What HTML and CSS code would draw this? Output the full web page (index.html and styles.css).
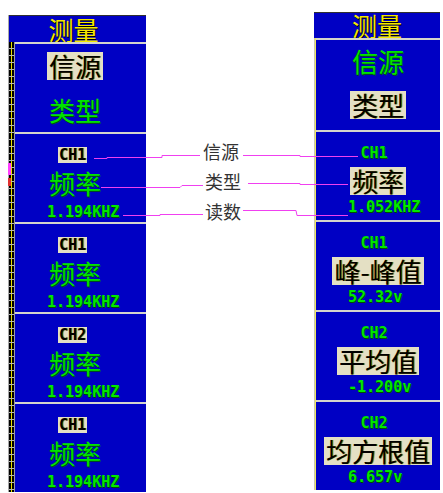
FILE: index.html
```html
<!DOCTYPE html>
<html lang="zh">
<head>
    <meta charset="UTF-8">
    <title>测量菜单</title>
    <link rel="stylesheet" href="styles.css">
</head>
<body>

<div class="page">

    <section class="scope scope-left">
        <div class="title">测量</div>
        <div class="body">
            <div class="strip"></div>
            <div class="menu">
                <div class="item item-pair">
                    <span class="name hi">信源</span>
                    <span class="name green">类型</span>
                </div>
                <div class="item">
                    <span class="ch hi">CH1</span>
                    <span class="name green">频率</span>
                    <span class="val">1.194KHZ</span>
                </div>
                <div class="item">
                    <span class="ch hi">CH1</span>
                    <span class="name green">频率</span>
                    <span class="val">1.194KHZ</span>
                </div>
                <div class="item">
                    <span class="ch hi">CH2</span>
                    <span class="name green">频率</span>
                    <span class="val">1.194KHZ</span>
                </div>
                <div class="item">
                    <span class="ch hi">CH1</span>
                    <span class="name green">频率</span>
                    <span class="val">1.194KHZ</span>
                </div>
            </div>
        </div>
    </section>

    <section class="scope scope-right">
        <div class="title">测量</div>
        <div class="body">
            <div class="strip"></div>
            <div class="menu">
                <div class="item item-pair">
                    <span class="name green">信源</span>
                    <span class="name hi">类型</span>
                </div>
                <div class="item">
                    <span class="ch green">CH1</span>
                    <span class="name hi">频率</span>
                    <span class="val">1.052KHZ</span>
                </div>
                <div class="item">
                    <span class="ch green">CH1</span>
                    <span class="name hi">峰-峰值</span>
                    <span class="val">52.32v</span>
                </div>
                <div class="item">
                    <span class="ch green">CH2</span>
                    <span class="name hi">平均值</span>
                    <span class="val">-1.200v</span>
                </div>
                <div class="item">
                    <span class="ch green">CH2</span>
                    <span class="name hi">均方根值</span>
                    <span class="val">6.657v</span>
                </div>
            </div>
        </div>
    </section>

    <!-- leader lines between the two menus -->
    <svg class="leaders" width="443" height="493" viewBox="0 0 443 493">
        <g fill="none" stroke="#f040f0" stroke-width="1">
            <polyline points="94,158.5 107,158.5 107,157.5 162,157.5 162,155.5 200,155.5"/>
            <polyline points="243,155.5 300,155.5 300,156.5 358,156.5"/>
            <polyline points="101,187.5 180,187.5 182,185.5 203,185.5"/>
            <polyline points="248,183.5 300,183.5 300,184.5 348,184.5"/>
            <polyline points="123,215.5 160,215.5 160,214.5 203,214.5"/>
            <polyline points="243,210.5 296,210.5 297,215.5 348,215.5"/>
        </g>
        <rect x="8" y="163" width="3" height="12" fill="#ff40ff"/>
        <rect x="8" y="178" width="3" height="8" fill="#e03030"/>
    </svg>

    <span class="note note-src">信源</span>
    <span class="note note-type">类型</span>
    <span class="note note-read">读数</span>

</div>

</body>
</html>
```

FILE: styles.css
```css
body {
    margin: 0;
    background: #fff;
    font-family: "Noto Sans CJK SC", "DejaVu Sans", sans-serif;
}

.page {
    position: relative;
    display: flex;
    align-items: flex-start;
    width: 443px;
    height: 493px;
    overflow: hidden;
}

.scope {
    background: #0000c4;
    display: flex;
    flex-direction: column;
}

.scope-left {
    margin: 15px 0 0 8px;
    width: 137px;
    border-left: 1px solid #a8a8a8;
}

.scope-right {
    margin: 12px 0 0 168px;
    width: 126px;
}

.title {
    border-top: 1px solid #303030;
    height: 26px;
    line-height: 26px;
    font-size: 25px;
    text-align: center;
    color: #f4e800;
    text-shadow: 1px 1px 0 #000;
}

.scope-left .title {
    padding-right: 8px;
}

.scope-right .title {
    height: 25px;
    line-height: 25px;
}

.body {
    display: flex;
}

.strip {
    width: 5px;
    flex: none;
    border-right: 1px solid #9a9a9a;
    background:
        repeating-linear-gradient(to bottom, transparent 0 6px, #b8b8b8 6px 7px),
        linear-gradient(to right, #000 0 2px, #e8e000 2px 3px, #000 3px);
}

.scope-right .strip {
    width: 2px;
    border-right: none;
    background: linear-gradient(to right, #c8c8b0 0 1px, #f0e860 1px);
}

.menu {
    flex: 1;
    display: flex;
    flex-direction: column;
}

.item {
    box-sizing: border-box;
    height: 90px;
    border-top: 2px solid #d4d4cc;
    display: flex;
    flex-direction: column;
    align-items: flex-start;
    padding: 13px 0 0 32px;
}

.item-pair {
    padding-top: 8px;
}

.scope-right .item {
    align-items: center;
    padding-left: 0;
}

.scope-right .item-pair {
    height: 92px;
    padding-top: 7px;
}

.name {
    font-size: 26px;
    line-height: 28px;
    padding: 0 2px;
}

.item-pair .name + .name {
    margin-top: 16px;
}

.ch {
    font-family: "DejaVu Sans Mono", monospace;
    font-weight: bold;
    font-size: 15px;
    line-height: 16px;
    padding: 0 1px;
    margin-left: 11px;
}

.scope-right .ch {
    margin-left: 0;
    margin-right: 8px;
}

.item .ch + .name {
    margin-top: 6px;
}

.val {
    margin-top: 8px;
    font-family: "DejaVu Sans Mono", monospace;
    font-weight: bold;
    font-size: 15px;
    line-height: 15px;
    color: #00e800;
    text-shadow: 1px 1px 0 #004c00;
}

.scope-right .val {
    align-self: flex-start;
    margin-top: 5px;
    margin-left: 32px;
}

.hi {
    background: #e4e0c4;
    color: #000;
    text-shadow: 1px 0 0 #8a8000;
}

.green {
    color: #00e400;
    text-shadow: 1px 1px 0 #005400;
}

.leaders {
    position: absolute;
    left: 0;
    top: 0;
    pointer-events: none;
}

.note {
    position: absolute;
    font-size: 18px;
    line-height: 18px;
    color: #333;
    background: #fff;
}

.note-src {
    left: 203px;
    top: 142px;
}

.note-type {
    left: 205px;
    top: 172px;
}

.note-read {
    left: 205px;
    top: 202px;
}
```
